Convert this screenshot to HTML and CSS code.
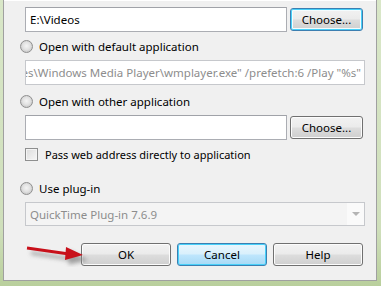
FILE: index.html
```html
<!DOCTYPE html>
<html lang="en">
  <head>
    <meta charset="UTF-8" />
    <title>Download Actions</title>
    <link rel="stylesheet" href="styles.css">
  </head>
  <body>
    <div class="dialog">
      <!-- Save to folder -->
      <div class="row">
        <div class="field field-path">E:\Videos</div>
        <button class="btn btn-hot">Choose...</button>
      </div>

      <!-- Default application -->
      <label class="option">
        <span class="radio"></span>
        <span>Open with default application</span>
      </label>
      <div class="field field-wide disabled">
        <span class="scroll-text">"C:\Program Files\Windows Media Player\wmplayer.exe" /prefetch:6 /Play "%s"</span>
      </div>

      <!-- Other application -->
      <label class="option">
        <span class="radio"></span>
        <span>Open with other application</span>
      </label>
      <div class="row row-other">
        <div class="field field-path"></div>
        <button class="btn">Choose...</button>
      </div>
      <label class="check">
        <span class="box"></span>
        <span>Pass web address directly to application</span>
      </label>

      <!-- Plug-in -->
      <label class="option option-plugin">
        <span class="radio"></span>
        <span>Use plug-in</span>
      </label>
      <div class="select disabled">
        <span class="select-text">QuickTime Plug-in 7.6.9</span>
        <span class="select-arrow"></span>
      </div>

      <!-- Dialog buttons -->
      <div class="actions">
        <button class="btn btn-action">OK</button>
        <button class="btn btn-action btn-default">Cancel</button>
        <button class="btn btn-action">Help</button>
      </div>

      <svg class="pointer" width="70" height="24" viewBox="0 0 70 24">
        <defs>
          <filter id="blur" x="-20%" y="-50%" width="140%" height="200%">
            <feGaussianBlur stdDeviation="2" />
          </filter>
        </defs>
        <g filter="url(#blur)" fill="#8a8a8a" stroke="#8a8a8a" opacity="0.8">
          <line x1="6" y1="10" x2="46" y2="16" stroke-width="3" />
          <polygon points="44,8 62,17 44,21" />
        </g>
        <line x1="2" y1="5" x2="44" y2="11" stroke="#c8101a" stroke-width="3" />
        <polygon points="41,4 58,12 40,17" fill="#c8101a" />
      </svg>
    </div>
  </body>
</html>
```

FILE: styles.css
```css
body {
  margin: 0;
  width: 381px;
  height: 286px;
  overflow: hidden;
  background: linear-gradient(180deg, #d9e7c8 0%, #cfdfbb 80%, #b9cf9c 100%);
  font-family: "Noto Sans", "Open Sans", Arial, sans-serif;
  font-size: 11px;
  color: #000;
}
.dialog {
  position: relative;
  box-sizing: border-box;
  margin-left: 3px;
  width: 374px;
  height: 281px;
  padding: 7px 0 0 21px;
  background: #f0f0f0;
  border: 1px solid #a0a0a0;
  border-top: none;
  display: flex;
  flex-direction: column;
  box-shadow: 0 1px 0 #ffffff inset;
}
.row {
  display: flex;
  align-items: center;
  gap: 3px;
  height: 25px;
}
.row-other {
  margin-top: 7px;
}
.field {
  box-sizing: border-box;
  height: 25px;
  background: #fff;
  border: 1px solid #abadb3;
  border-top-color: #a0a2a8;
  padding: 0 4px;
  display: flex;
  align-items: center;
  white-space: nowrap;
  overflow: hidden;
  font-size: 11.5px;
}
.field-path {
  width: 262px;
}
.field-wide {
  width: 340px;
  margin-top: 6px;
  justify-content: flex-end;
  padding-right: 3px;
}
.disabled {
  color: #8d8d8d;
  border-color: #c6c8cc;
}
.option {
  display: flex;
  align-items: center;
  gap: 6px;
  height: 16px;
  margin: 6px 0 0 -5px;
  font-size: 11.5px;
}
.option + .row,
.option + .select {
  margin-top: 6px;
}
.field-wide + .option {
  margin-top: 8px;
}
.option-plugin {
  margin-top: 18px;
}
.radio {
  box-sizing: border-box;
  width: 13px;
  height: 13px;
  border-radius: 50%;
  border: 1px solid #8f8f8f;
  background: radial-gradient(circle at 50% 45%, #f4f4f4 0%, #e2e2e2 45%, #cfcfcf 70%, #f2f2f2 100%);
}
.check {
  display: flex;
  align-items: center;
  gap: 7px;
  height: 16px;
  margin-top: 6px;
}
.box {
  box-sizing: border-box;
  width: 13px;
  height: 13px;
  border: 1px solid #8e8f8f;
  background: linear-gradient(135deg, #dcdcdc 0%, #f6f6f6 100%);
  box-shadow: 0 0 0 1px #f4f4f4 inset;
}
.select {
  box-sizing: border-box;
  width: 340px;
  height: 24px;
  margin-top: 6px;
  border: 1px solid #c6c8cc;
  background: #f4f4f4;
  display: flex;
  align-items: center;
  font-size: 11.5px;
}
.select-text {
  flex: 1;
  padding-left: 4px;
}
.select-arrow {
  width: 17px;
  height: 22px;
  background: #fafafa;
  display: flex;
  align-items: center;
  justify-content: center;
}
.select-arrow::after {
  content: "";
  border-left: 4px solid transparent;
  border-right: 4px solid transparent;
  border-top: 4px solid #b4b4b4;
}
.btn {
  box-sizing: border-box;
  height: 23px;
  width: 73px;
  padding: 0;
  font: inherit;
  font-size: 11.5px;
  color: #000;
  border: 1px solid #707070;
  border-radius: 3px;
  background: linear-gradient(180deg, #f2f2f2 0%, #ebebeb 48%, #dddddd 52%, #cfcfcf 100%);
  box-shadow: 0 0 0 1px #fcfcfc inset;
}
.btn-hot {
  border-color: #3c7fb1;
  box-shadow: 0 0 0 1px #48d0f9 inset, 0 0 0 2px #f4fcfe inset;
}
.actions {
  display: flex;
  gap: 6px;
  margin: 17px 0 0 56px;
}
.btn-action {
  width: 90px;
}
.btn-default {
  border-color: #3c7fb1;
  background: linear-gradient(180deg, #eaf6fd 0%, #d9f0fc 48%, #bee6fd 52%, #a7d9f5 100%);
  box-shadow: 0 0 0 1px #48d0f9 inset;
}
.pointer {
  position: absolute;
  left: 21px;
  top: 243px;
}
```
